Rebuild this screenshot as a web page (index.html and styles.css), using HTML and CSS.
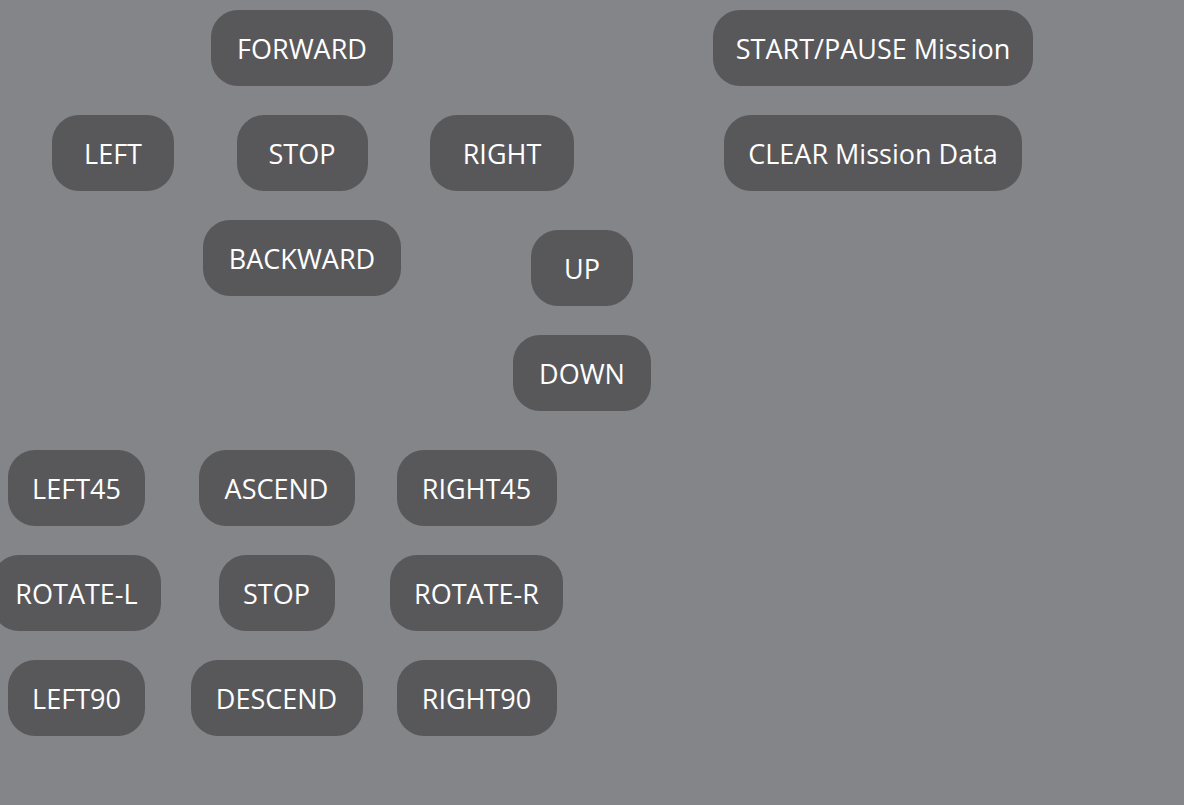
FILE: index.html
```html
<!DOCTYPE html>
<html>
<head>
<meta charset="utf-8">
<link rel="stylesheet" href="styles.css">
</head>
<body>
<div class="top">
  <button class="btn c2 r1 w-forward">FORWARD</button>
  <button class="btn c5 r1 w-start">START/PAUSE Mission</button>
  <button class="btn c1 r2 w-left">LEFT</button>
  <button class="btn c2 r2 w-stop">STOP</button>
  <button class="btn c3 r2 w-right">RIGHT</button>
  <button class="btn c5 r2 w-clear">CLEAR Mission Data</button>
  <button class="btn c2 r3 w-backward">BACKWARD</button>
  <button class="btn c34 r3 drop w-up">UP</button>
  <button class="btn c34 r4 drop w-down">DOWN</button>
</div>
<div class="bottom">
  <button class="btn w-left45">LEFT45</button>
  <button class="btn w-ascend">ASCEND</button>
  <button class="btn w-right45">RIGHT45</button>
  <button class="btn w-rotl">ROTATE-L</button>
  <button class="btn w-stop2">STOP</button>
  <button class="btn w-rotr">ROTATE-R</button>
  <button class="btn w-left90">LEFT90</button>
  <button class="btn w-descend">DESCEND</button>
  <button class="btn w-right90">RIGHT90</button>
</div>
</body>
</html>
```
FILE: styles.css
```css
html, body {
  margin: 0;
  padding: 0;
}
body {
  background: #848589;
  padding: 10px 8px 0 8px;
  width: 1184px;
  height: 805px;
  box-sizing: border-box;
  overflow: hidden;
  font-family: "Open Sans", "Noto Sans", sans-serif;
}
.top {
  display: grid;
  grid-template-columns: 210px 168px 232px 160px 190px;
  grid-template-rows: repeat(4, 76px);
  row-gap: 29px;
  justify-items: center;
}
.bottom {
  margin-top: 49px;
  display: grid;
  grid-template-columns: 137px 137px 137px;
  grid-auto-rows: 76px;
  row-gap: 29px;
  column-gap: 63px;
  justify-items: center;
}
.btn {
  height: 76px;
  padding: 1px 0 0 0;
  border: none;
  border-radius: 27px;
  background: #58585b;
  color: #ffffff;
  font-family: "Open Sans", "Noto Sans", sans-serif;
  font-size: 27px;
  text-align: center;
  white-space: nowrap;
  justify-self: center;
}
.c1 { grid-column: 1; }
.c2 { grid-column: 2; }
.c3 { grid-column: 3; }
.c34 { grid-column: 3 / 5; }
.c5 { grid-column: 5; }
.r1 { grid-row: 1; }
.r2 { grid-row: 2; }
.r3 { grid-row: 3; }
.r4 { grid-row: 4; }
.drop { margin-top: 10px; }

.w-forward { width: 182px; }
.w-start { width: 320px; }
.w-left { width: 122px; }
.w-stop { width: 131px; }
.w-right { width: 144px; }
.w-clear { width: 298px; }
.w-backward { width: 198px; }
.w-up { width: 102px; }
.w-down { width: 138px; }
.w-left45 { width: 137px; }
.w-ascend { width: 156px; }
.w-right45 { width: 160px; }
.w-rotl { width: 169px; }
.w-stop2 { width: 116px; }
.w-rotr { width: 173px; }
.w-left90 { width: 137px; }
.w-descend { width: 172px; }
.w-right90 { width: 160px; }
```
